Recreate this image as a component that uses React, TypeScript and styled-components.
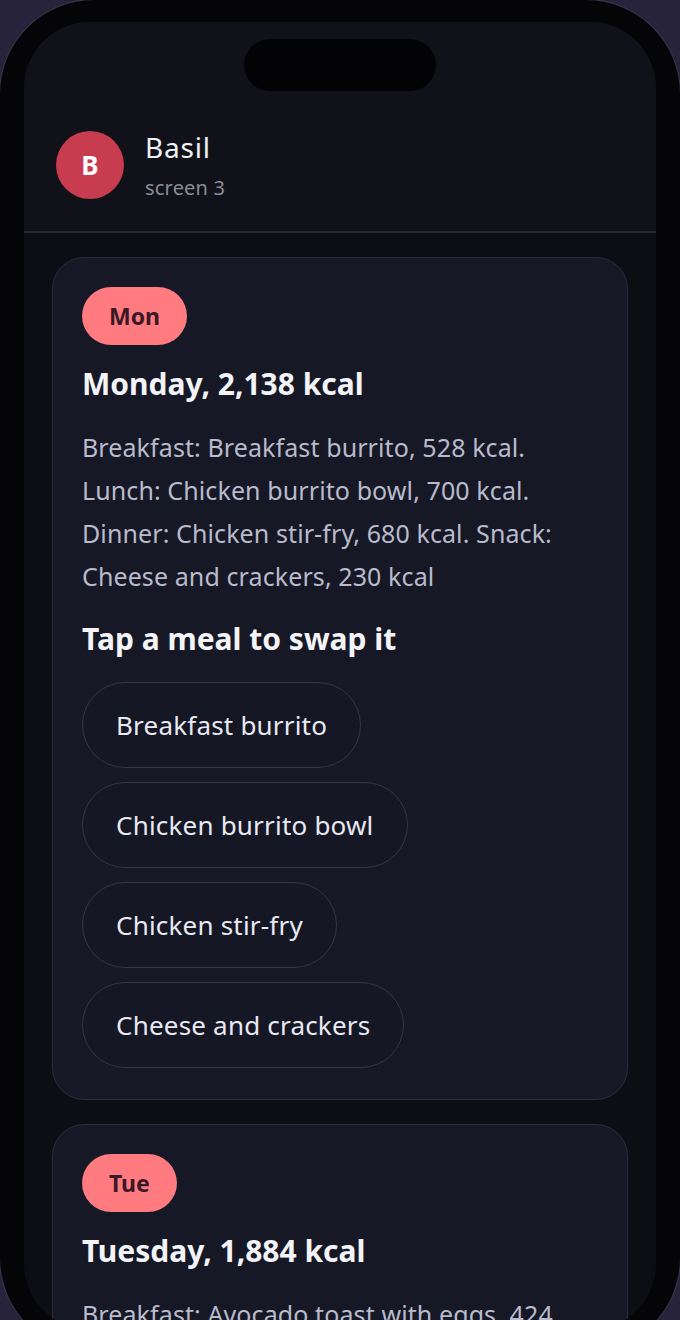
import React from "react";
import styled, { createGlobalStyle } from "styled-components";

const GlobalStyle = createGlobalStyle`
  html, body {
    margin: 0;
    padding: 0;
    background: #27233a;
    overflow: hidden;
  }
  body {
    font-family: "Noto Sans", "Open Sans", sans-serif;
  }
`;

type Day = {
  short: string;
  title: string;
  summary: string;
  meals: string[];
};

const days: Day[] = [
  {
    short: "Mon",
    title: "Monday, 2,138 kcal",
    summary:
      "Breakfast: Breakfast burrito, 528 kcal. Lunch: Chicken burrito bowl, 700 kcal. Dinner: Chicken stir-fry, 680 kcal. Snack: Cheese and crackers, 230 kcal",
    meals: ["Breakfast burrito", "Chicken burrito bowl", "Chicken stir-fry", "Cheese and crackers"],
  },
  {
    short: "Tue",
    title: "Tuesday, 1,884 kcal",
    summary:
      "Breakfast: Avocado toast with eggs, 424 kcal. Lunch: Turkey wrap, 560 kcal. Dinner: Salmon with rice, 690 kcal. Snack: Greek yogurt, 210 kcal",
    meals: ["Avocado toast with eggs", "Turkey wrap", "Salmon with rice", "Greek yogurt"],
  },
];

const App = () => {
  return (
    <>
      <GlobalStyle />
      <Phone>
        <Screen>
          <Top>
            <Island />
            <Header>
              <Avatar>B</Avatar>
              <Who>
                <Name>Basil</Name>
                <Sub>screen 3</Sub>
              </Who>
            </Header>
          </Top>
          <List>
            {days.map((d) => (
              <Card key={d.short}>
                <Badge>{d.short}</Badge>
                <Title>{d.title}</Title>
                <Summary>{d.summary}</Summary>
                <SwapLabel>Tap a meal to swap it</SwapLabel>
                <Chips>
                  {d.meals.map((m) => (
                    <Chip key={m}>{m}</Chip>
                  ))}
                </Chips>
              </Card>
            ))}
          </List>
        </Screen>
      </Phone>
    </>
  );
};

export default App;

const Phone = styled.div`
  box-sizing: border-box;
  width: 680px;
  height: 1352px;
  padding: 22px 24px;
  border-radius: 94px;
  background: #050507;
  box-shadow: 0 0 0 1px #3a3652;
  display: flex;
`;

const Screen = styled.div`
  flex: 1;
  border-radius: 66px;
  background: #0d0e13;
  overflow: hidden;
  display: flex;
  flex-direction: column;
`;

const Top = styled.div`
  background: #111219;
  border-bottom: 2px solid #242634;
  display: flex;
  flex-direction: column;
  align-items: center;
  padding: 17px 32px 30px;
`;

const Island = styled.div`
  width: 192px;
  height: 52px;
  border-radius: 26px;
  background: #030305;
`;

const Header = styled.div`
  align-self: stretch;
  display: flex;
  align-items: center;
  gap: 21px;
  margin-top: 38px;
`;

const Avatar = styled.div`
  width: 68px;
  height: 68px;
  border-radius: 50%;
  background: #c73c4f;
  color: #ffffff;
  font-size: 26px;
  font-weight: 700;
  display: flex;
  align-items: center;
  justify-content: center;
`;

const Who = styled.div`
  display: flex;
  flex-direction: column;
  gap: 10px;
`;

const Name = styled.div`
  font-size: 28px;
  color: #f1f1f6;
  line-height: 36px;
  letter-spacing: 0.8px;
`;

const Sub = styled.div`
  font-size: 20px;
  color: #8a8c9b;
  line-height: 26px;
  letter-spacing: 0.2px;
`;

const List = styled.div`
  display: flex;
  flex-direction: column;
  gap: 24px;
  padding: 24px 28px;
`;

const Card = styled.div`
  background: #161826;
  border: 1.5px solid #2a2d3f;
  border-radius: 32px;
  padding: 29px 29px 31px;
  display: flex;
  flex-direction: column;
  align-items: flex-start;
`;

const Badge = styled.div`
  height: 58px;
  padding: 0 27px;
  border-radius: 29px;
  background: #ff7b80;
  color: #3a1826;
  font-size: 23px;
  font-weight: 700;
  display: flex;
  align-items: center;
`;

const Title = styled.h2`
  margin: 19px 0 0;
  font-size: 30px;
  font-weight: 700;
  color: #f4f4f8;
  line-height: 39px;
`;

const Summary = styled.p`
  margin: 23px 0 0;
  font-size: 25px;
  line-height: 43px;
  color: #b9bbcc;
  letter-spacing: 0.1px;
`;

const SwapLabel = styled.h3`
  margin: 23px 0 0;
  font-size: 30px;
  font-weight: 700;
  color: #f4f4f8;
  line-height: 36px;
`;

const Chips = styled.div`
  margin-top: 25px;
  display: flex;
  flex-direction: column;
  align-items: flex-start;
  gap: 14px;
`;

const Chip = styled.button`
  height: 86px;
  padding: 0 33px;
  border-radius: 43px;
  border: 1.5px solid #33364a;
  background: #151725;
  color: #e9e9f1;
  font-family: inherit;
  font-size: 26px;
  letter-spacing: 0.2px;
  cursor: pointer;
`;
